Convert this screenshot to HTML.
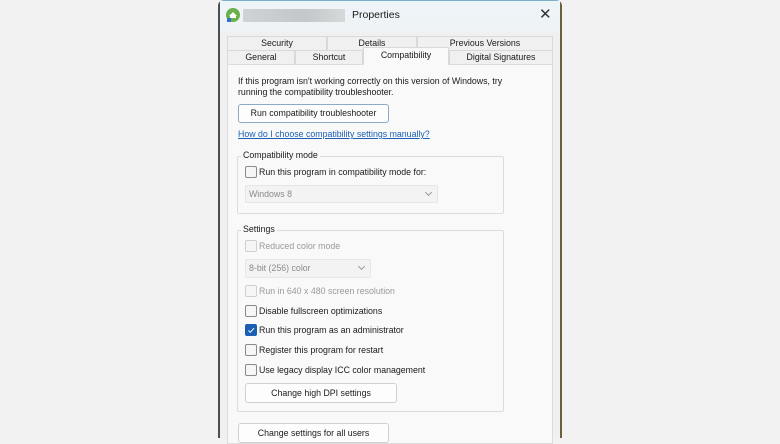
<!DOCTYPE html>
<html><head><meta charset="utf-8"><style>
*{margin:0;padding:0;box-sizing:border-box}
body{width:780px;height:438px;background:#f2f2f2;position:relative;overflow:hidden;font-family:"Liberation Sans",sans-serif;font-size:8.8px;color:#1a1a1a}
.a{position:absolute;white-space:nowrap}
.win{position:absolute;left:218px;top:0;width:344px;height:438px;background:#f0f0f0;border-left:2px solid #4a5050;border-right:2px solid #6a6040;border-top:1px solid #7ab0c8;border-radius:6px 6px 0 0}
.title{position:absolute;left:220px;top:1px;width:340px;height:30px;background:linear-gradient(#eef5f8,#eef3f5)}
.tab{position:absolute;height:14px;border:1px solid #d9d9d9;border-bottom:none;background:#f0f0f0;text-align:center;line-height:13px}
.panel{position:absolute;left:227px;top:64px;width:326px;height:380px;background:#f9f9f9;border:1px solid #dcdcdc}
.btn{position:absolute;background:#fdfdfd;border:1px solid #d0d0d0;border-radius:3px;text-align:center}
.grp{position:absolute;border:1px solid #dcdcdc;border-radius:2px}
.lbl{position:absolute;background:#f9f9f9;padding:0 2px}
.cb{position:absolute;width:12px;height:12px;border:1px solid #8a8a8a;border-radius:2px;background:#f6f6f6}
.dis{color:#9a9a9a}
.cbd{border-color:#cfcfcf}
.dd{position:absolute;background:#f3f3f3;border:1px solid #e6e6e6;border-radius:2px;color:#8a8a8a;padding-left:3px}
.dd:after{content:"";position:absolute;right:6px;top:4px;width:4px;height:4px;border-right:1px solid #999;border-bottom:1px solid #999;transform:rotate(45deg)}
</style></head><body>
<div class="win"></div>
<div class="title"></div>
<svg class="a" style="left:225px;top:7px" width="16" height="16" viewBox="0 0 16 16"><circle cx="8" cy="8" r="7" fill="#6ab04c"/><path d="M4 9 L8 5 L12 9 L11 9 L11 11 L5 11 L5 9Z" fill="#fff"/><rect x="2" y="11" width="4" height="4" fill="#3a6fd0"/></svg>
<div class="a" style="left:243px;top:9px;width:102px;height:13px;background:linear-gradient(90deg,#cfd3d5,#c3c7c9 60%,#d6d9da)"></div>
<div class="a" style="left:352px;top:9px;font-size:10.5px">Properties</div>
<div class="a" style="left:539px;top:5px;font-size:15px;color:#333">✕</div>

<div class="tab" style="left:227px;top:36px;width:100px">Security</div>
<div class="tab" style="left:327px;top:36px;width:90px">Details</div>
<div class="tab" style="left:417px;top:36px;width:136px">Previous Versions</div>
<div class="tab" style="left:227px;top:50px;width:68px">General</div>
<div class="tab" style="left:295px;top:50px;width:68px">Shortcut</div>
<div class="tab" style="left:449px;top:50px;width:104px">Digital Signatures</div>
<div class="panel"></div>
<div class="tab" style="left:363px;top:47px;width:86px;height:18px;background:#f9f9f9;z-index:2;line-height:15px">Compatibility</div>

<div class="a" style="left:238px;top:76px;line-height:11px">If this program isn't working correctly on this version of Windows, try<br>running the compatibility troubleshooter.</div>
<div class="btn" style="left:238px;top:104px;width:151px;height:19px;line-height:17px;border-color:#8ea8c8">Run compatibility troubleshooter</div>
<div class="a" style="left:238px;top:129px;color:#1a5fb4;text-decoration:underline">How do I choose compatibility settings manually?</div>

<div class="grp" style="left:237px;top:156px;width:267px;height:58px"></div>
<div class="lbl" style="left:241px;top:150px">Compatibility mode</div>
<div class="cb" style="left:245px;top:166px"></div>
<div class="a" style="left:259px;top:167px">Run this program in compatibility mode for:</div>
<div class="dd" style="left:245px;top:185px;width:193px;height:18px;line-height:16px">Windows 8</div>

<div class="grp" style="left:237px;top:230px;width:267px;height:182px"></div>
<div class="lbl" style="left:241px;top:224px">Settings</div>
<div class="cb cbd" style="left:245px;top:240px"></div>
<div class="a dis" style="left:259px;top:241px">Reduced color mode</div>
<div class="dd" style="left:245px;top:259px;width:126px;height:19px;line-height:17px">8-bit (256) color</div>
<div class="cb cbd" style="left:245px;top:285px"></div>
<div class="a dis" style="left:259px;top:286px">Run in 640 x 480 screen resolution</div>
<div class="cb" style="left:245px;top:305px"></div>
<div class="a" style="left:259px;top:306px">Disable fullscreen optimizations</div>
<div class="cb" style="left:245px;top:324px;background:#1a5fb4;border-color:#1a5fb4"><svg width="10" height="10" style="position:absolute;left:0;top:0"><path d="M2.5 5.5 L4.3 7.3 L8 3.2" stroke="#fff" stroke-width="1" fill="none"/></svg></div>
<div class="a" style="left:259px;top:325px">Run this program as an administrator</div>
<div class="cb" style="left:245px;top:344px"></div>
<div class="a" style="left:259px;top:345px">Register this program for restart</div>
<div class="cb" style="left:245px;top:364px"></div>
<div class="a" style="left:259px;top:365px">Use legacy display ICC color management</div>
<div class="btn" style="left:245px;top:383px;width:152px;height:20px;line-height:18px">Change high DPI settings</div>

<div class="btn" style="left:238px;top:423px;width:151px;height:20px;line-height:18px">Change settings for all users</div>
</body></html>
